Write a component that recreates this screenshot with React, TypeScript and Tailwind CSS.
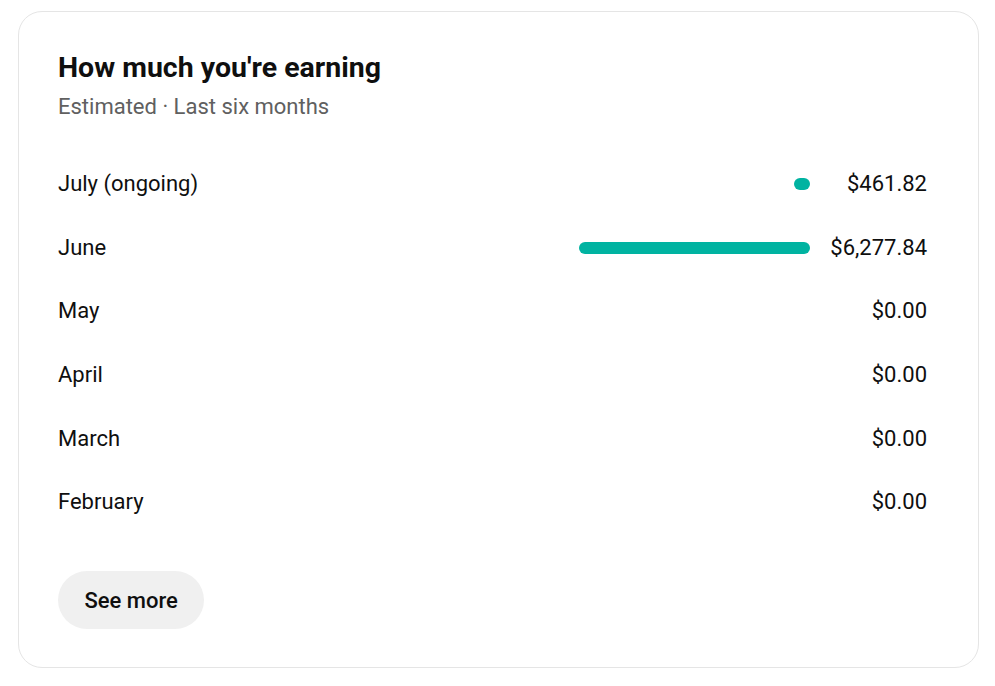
const rows = [
  { month: "July (ongoing)", amount: "$461.82", bar: 16 },
  { month: "June", amount: "$6,277.84", bar: 231 },
  { month: "May", amount: "$0.00", bar: 0 },
  { month: "April", amount: "$0.00", bar: 0 },
  { month: "March", amount: "$0.00", bar: 0 },
  { month: "February", amount: "$0.00", bar: 0 },
];

export default function App() {
  return (
    <div className="min-h-[686px] bg-white pt-[11px] pl-[18px] pr-[16px] font-['Roboto',sans-serif] text-[#0f0f0f]">
      <div className="w-[961px] rounded-[24px] border border-[#e5e5e5] pl-[39px] pr-[51px] pt-[38px] pb-[38px]">
        <h2 className="text-[28.5px] leading-[36px] font-bold">How much you're earning</h2>
        <p className="mt-[6px] text-[22px] leading-[30px] text-[#606060]">Estimated · Last six months</p>

        <div className="mt-[30px] flex flex-col">
          {rows.map((r) => (
            <div key={r.month} className="flex h-[63.7px] items-center">
              <span className="flex-1 text-[22px] leading-[30px]">{r.month}</span>
              {r.bar > 0 && (
                <div className="h-[12px] rounded-full bg-[#00b3a1]" style={{ width: r.bar }} />
              )}
              <span className="w-[117px] text-right text-[22px] leading-[30px]">{r.amount}</span>
            </div>
          ))}
        </div>

        <button className="mt-[37px] h-[58px] rounded-full bg-[#f0f0f0] px-[26.5px] text-[22px] font-medium">
          See more
        </button>
      </div>
    </div>
  );
}
